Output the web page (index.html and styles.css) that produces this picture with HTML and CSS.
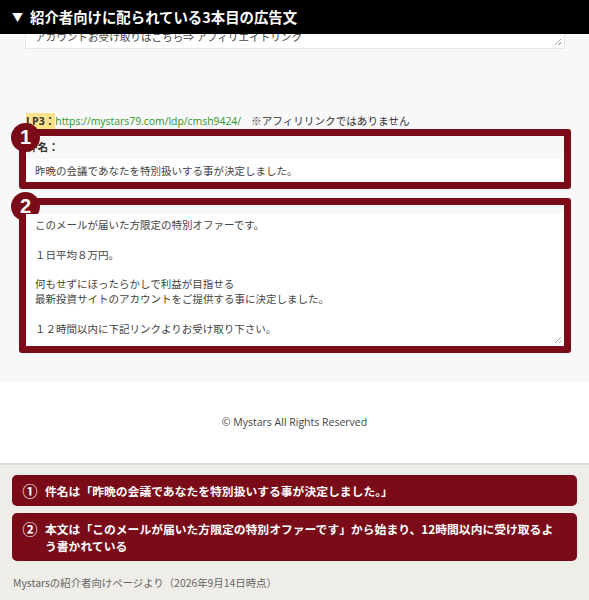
FILE: index.html
```html
<!DOCTYPE html>
<html lang="ja">
<head>
<meta charset="utf-8">
<link rel="stylesheet" href="styles.css">
</head>
<body>
<div class="header"><span class="tri">▼</span>紹介者向けに配られている3本目の広告文</div>
<div class="shot">
  <div class="clip"><div class="clip-line">アカウントお受け取りはこちら⇒ アフィリエイトリンク</div><span class="grip"></span></div>
  <div class="lp"><span class="lp-tag">LP3：</span><span class="lp-url">https://mystars79.com/ldp/cmsh9424/</span><span class="lp-note">※アフィリリンクではありません</span></div>
  <div class="box box1">
    <span class="badge">1</span>
    <div class="label">件名：</div>
    <div class="input">昨晩の会議であなたを特別扱いする事が決定しました。</div>
  </div>
  <div class="box box2">
    <span class="badge">2</span>
    <div class="strip"></div>
    <div class="area">
      <p>このメールが届いた方限定の特別オファーです。</p>
      <p>&nbsp;</p>
      <p>１日平均８万円。</p>
      <p>&nbsp;</p>
      <p>何もせずにほったらかしで利益が目指せる</p>
      <p>最新投資サイトのアカウントをご提供する事に決定しました。</p>
      <p>&nbsp;</p>
      <p>１２時間以内に下記リンクよりお受け取り下さい。</p>
      <span class="grip"></span>
    </div>
  </div>
</div>
<div class="footer">© Mystars All Rights Reserved</div>
<div class="notes">
  <div class="note note1"><span class="num">①</span><span class="txt">件名は「昨晩の会議であなたを特別扱いする事が決定しました。」</span></div>
  <div class="note note2"><span class="num">②</span><span class="txt">本文は「このメールが届いた方限定の特別オファーです」から始まり、12時間以内に受け取るよう書かれている</span></div>
  <div class="caption">Mystarsの紹介者向けページより（2026年9月14日時点）</div>
</div>
</body>
</html>
```
FILE: styles.css
```css
html, body {
  margin: 0;
  padding: 0;
  width: 589px;
  height: 600px;
  overflow: hidden;
  font-family: "Noto Sans CJK JP", "Noto Sans", sans-serif;
  background: #efede8;
}
.header {
  height: 34px;
  line-height: 33px;
  background: #000;
  color: #fff;
  font-weight: bold;
  font-size: 14.4px;
  padding-left: 12px;
  white-space: nowrap;
}
.tri {
  font-size: 11px;
  margin-right: 7px;
  vertical-align: 1px;
}
.shot {
  background: #f8f8f8;
  padding: 0 18px 30px 19px;
  height: 318px;
}
.clip {
  position: relative;
  height: 14px;
  overflow: hidden;
  margin: 0 6px 0 6px;
  background: #fff;
  border: 1px solid #e6e6e6;
  border-top: none;
}
.clip-line {
  margin-top: -5px;
  padding-left: 9px;
  font-size: 10.6px;
  line-height: 16px;
  color: #444;
}
.grip {
  position: absolute;
  right: 3px;
  bottom: 3px;
  width: 6px;
  height: 6px;
  background: linear-gradient(135deg, transparent 45%, #aaa 45%, #aaa 55%, transparent 55%, transparent 75%, #aaa 75%, #aaa 85%, transparent 85%);
}
.lp {
  margin-top: 64px;
  height: 16px;
  line-height: 16px;
  font-size: 10.6px;
  padding-left: 7px;
  color: #333;
  white-space: nowrap;
}
.lp-tag {
  background: #fde28a;
  font-weight: bold;
  font-family: "Open Sans", "Noto Sans CJK JP", sans-serif;
  padding: 1px 0;
}
.lp-url {
  color: #2f962f;
  font-family: "Open Sans", sans-serif;
  font-size: 10.4px;
  margin-right: 10px;
}
.box {
  position: relative;
  border: 7px solid #7a0c19;
  border-radius: 3px;
  background: #f8f8f8;
}
.box1 {
  height: 46px;
  display: flex;
  flex-direction: column;
}
.box2 {
  margin-top: 9px;
  height: 141px;
  display: flex;
  flex-direction: column;
}
.badge {
  position: absolute;
  left: -15px;
  top: -13px;
  width: 29px;
  height: 29px;
  border-radius: 50%;
  background: #7a0c19;
  color: #fff;
  font-family: "Liberation Sans", Arial, sans-serif;
  font-weight: bold;
  font-size: 20px;
  line-height: 29px;
  text-align: center;
}
.label {
  height: 23px;
  line-height: 22px;
  font-size: 10.6px;
  font-weight: bold;
  color: #333;
  padding-left: 1px;
}
.input {
  flex: 1;
  background: #fff;
  font-size: 10.5px;
  line-height: 23px;
  color: #444;
  padding-left: 9px;
}
.strip {
  height: 9px;
}
.area {
  position: relative;
  flex: 1;
  background: #fff;
  padding: 4px 0 0 9px;
  font-size: 10.5px;
  line-height: 14.8px;
  color: #444;
}
.area p {
  margin: 0;
}
.footer {
  height: 81px;
  background: #fff;
  text-align: center;
  font-family: "Open Sans", sans-serif;
  font-size: 10.5px;
  line-height: 80px;
  color: #444;
  border-bottom: 2px solid #dddbd6;
}
.notes {
  padding: 10px 12px 0 12px;
}
.note {
  display: flex;
  align-items: flex-start;
  background: #7a0c19;
  color: #fff;
  border-radius: 5px;
  font-weight: bold;
  font-size: 11.8px;
  line-height: 17px;
  padding: 7px 21px 7px 10px;
}
.num {
  flex: none;
  width: 16px;
  margin-right: 7px;
  font-size: 15px;
  text-align: center;
}
.note2 {
  margin-top: 7px;
}
.caption {
  margin-top: 14px;
  font-size: 10.4px;
  color: #666;
  padding-left: 1px;
}
```
